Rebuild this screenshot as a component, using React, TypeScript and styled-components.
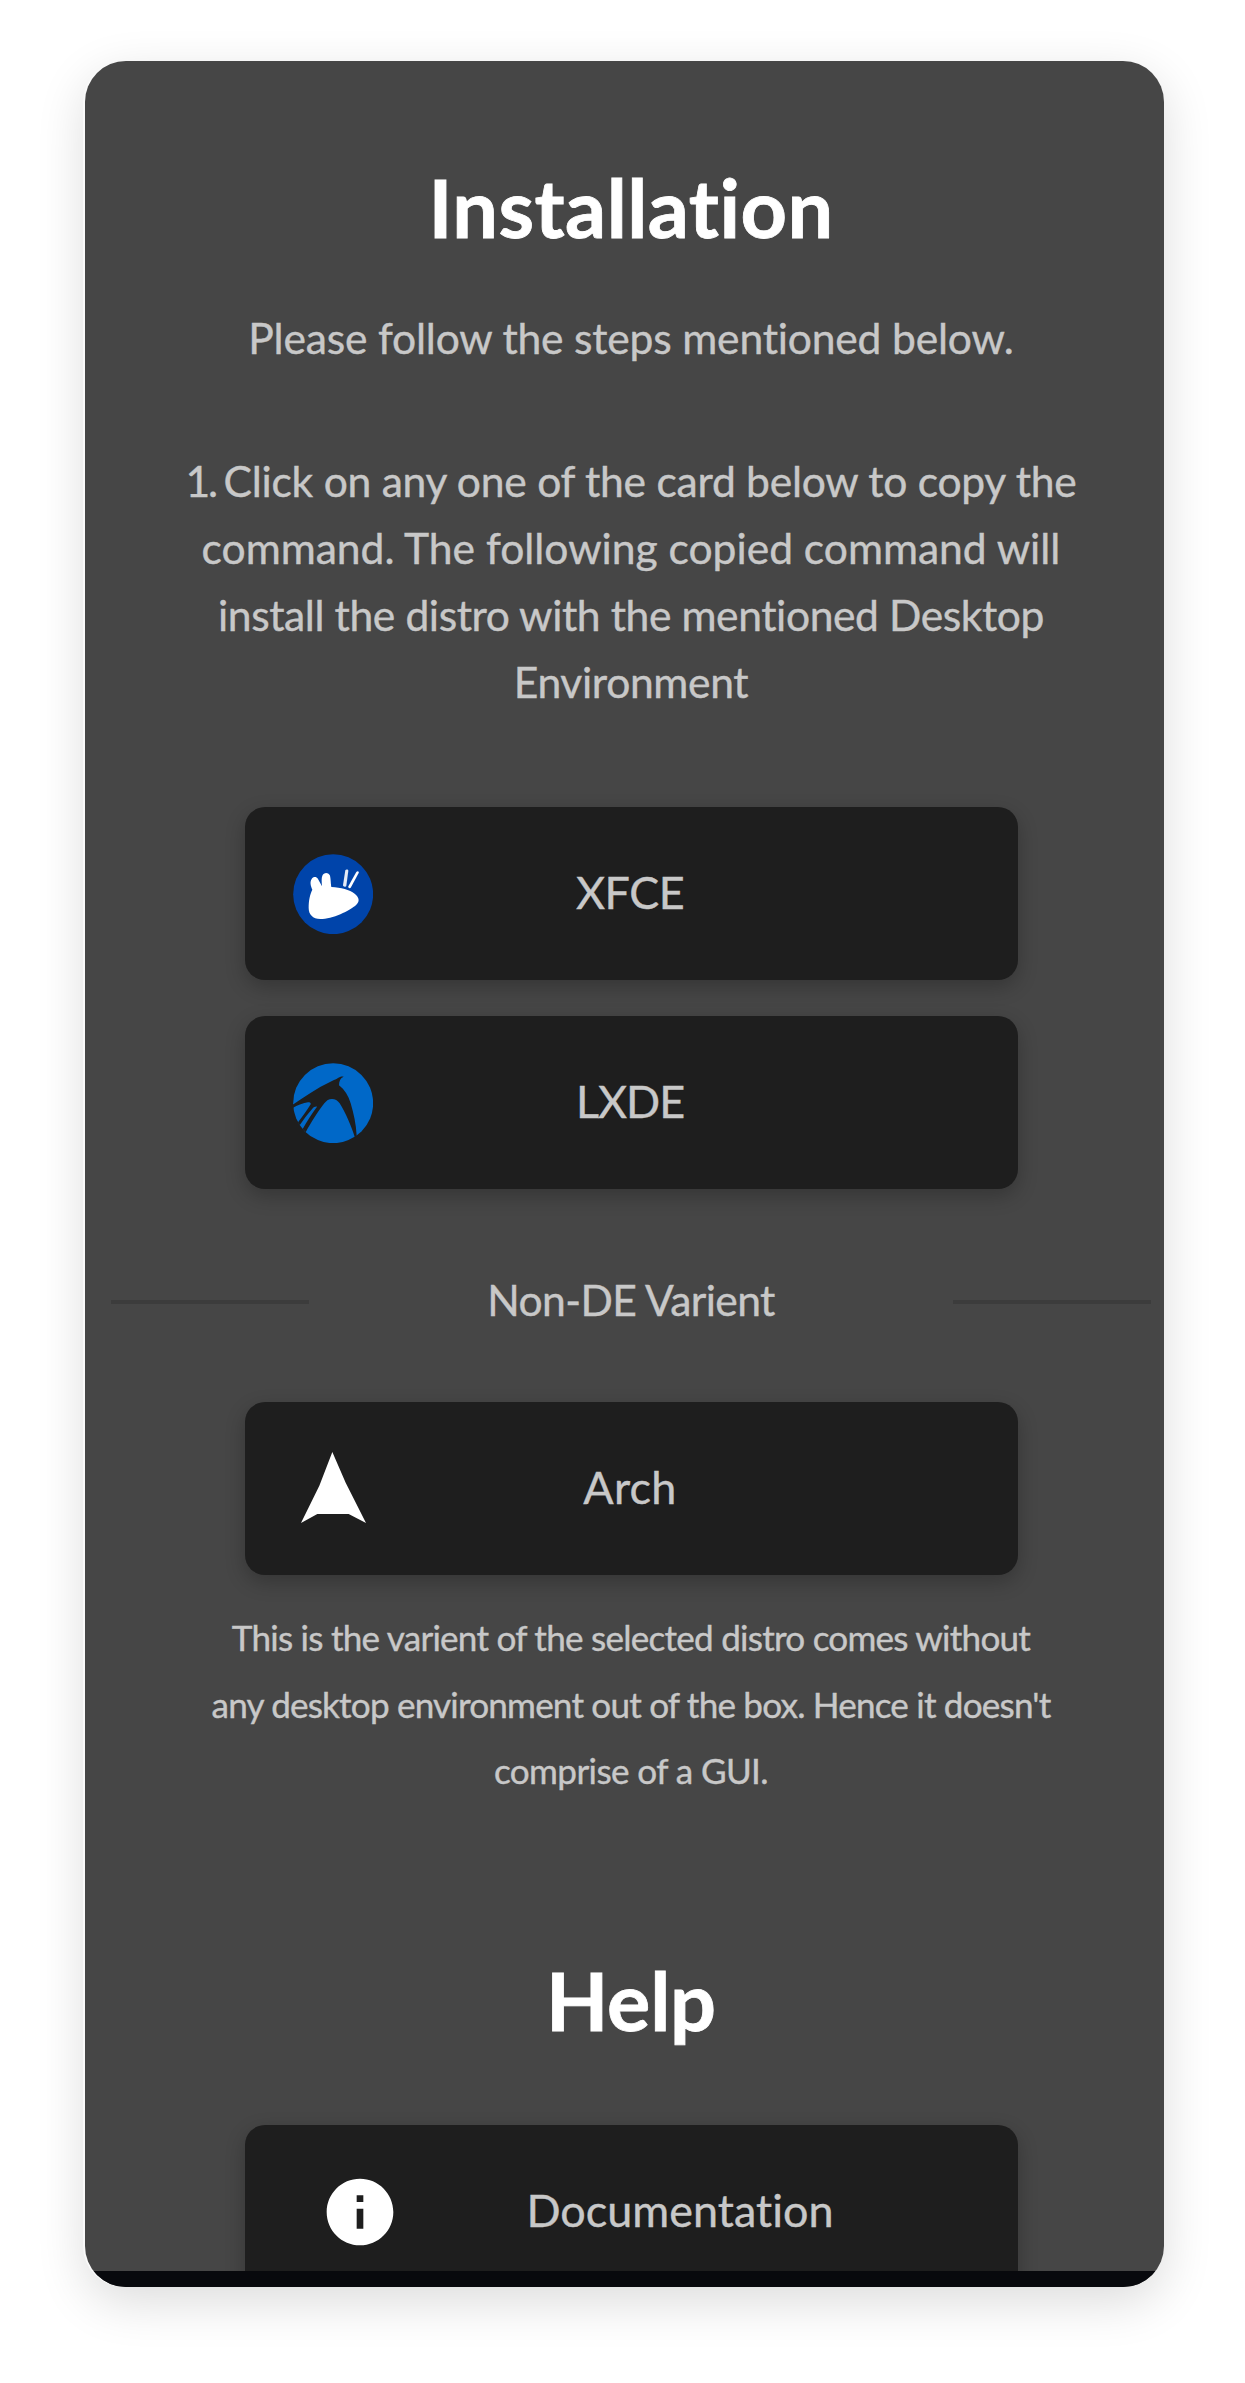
import React from 'react';
import styled, { createGlobalStyle } from 'styled-components';

const GlobalStyle = createGlobalStyle`
  * { box-sizing: border-box; }
  body {
    margin: 0;
    background: #fff;
    font-family: Lato, "Open Sans", sans-serif;
  }
`;

const Page = styled.main`
  height: 2383px;
  padding: 60.5px 0 0 85px;
  overflow: hidden;
`;

const Panel = styled.div`
  display: flex;
  flex-direction: column;
  width: 1079px;
  height: 2226.5px;
  border-radius: 41px;
  overflow: hidden;
  background: #464646;
  box-shadow: -2px 0 0 #fafafa, 0 15px 50px rgba(0, 0, 0, 0.14);
`;

const Content = styled.div`
  flex: 1;
  min-height: 0;
  overflow: hidden;
  display: flex;
  flex-direction: column;
  align-items: center;
  padding: 97.5px 0 0 13px;
`;

const BottomBar = styled.div`
  flex: none;
  height: 16px;
  background: #08090d;
`;

const Heading = styled.h2<{ $tracking: number; $top?: number }>`
  flex: none;
  margin: ${(p) => p.$top ?? 0}px 0 0;
  font-size: 81px;
  font-weight: 700;
  line-height: 97px;
  color: #fff;
  letter-spacing: ${(p) => p.$tracking}px;
  -webkit-text-stroke: 0.8px #fff;
`;

const Paragraph = styled.p<{ $top: number; $small?: boolean }>`
  flex: none;
  margin: ${(p) => p.$top}px 0 0;
  font-size: ${(p) => (p.$small ? 35.1 : 42.6)}px;
  line-height: ${(p) => (p.$small ? 66.7 : 67)}px;
  color: #c8c8c8;
  text-align: center;
  -webkit-text-stroke: 0.4px #c8c8c8;
`;

const Line = styled.span<{ $tracking: number }>`
  display: block;
  white-space: nowrap;
  letter-spacing: ${(p) => p.$tracking}px;
`;

const StepNumber = styled.span`
  letter-spacing: -2.2px;
  margin-right: -3px;
`;

const CardList = styled.div<{ $top: number }>`
  flex: none;
  display: flex;
  flex-direction: column;
  gap: 36px;
  margin-top: ${(p) => p.$top}px;
`;

const Card = styled.button<{ $shift: number }>`
  display: grid;
  grid-template-columns: ${(p) => 177 + p.$shift}px 1fr ${(p) => 177 - p.$shift}px;
  align-items: center;
  width: 773px;
  height: 173px;
  padding: 0;
  border: 0;
  border-radius: 20px;
  background: #1e1e1e;
  box-shadow: 0 7px 20px rgba(0, 0, 0, 0.24);
  font-family: inherit;
`;

const CardIcon = styled.span<{ $left: number }>`
  display: flex;
  padding-left: ${(p) => p.$left}px;

  svg {
    width: 80px;
    height: 80px;
  }
`;

const CardLabel = styled.span<{ $tracking: number }>`
  justify-self: center;
  padding: 0 2px 4px 0;
  font-size: 44.9px;
  line-height: 54px;
  color: #c8c8c8;
  white-space: nowrap;
  letter-spacing: ${(p) => p.$tracking}px;
  -webkit-text-stroke: 0.4px #c8c8c8;
`;

const Divider = styled.div`
  flex: none;
  display: flex;
  justify-content: space-between;
  align-items: center;
  width: 1040px;
  height: 67px;
  margin-top: 77px;
`;

const Rule = styled.span`
  width: 198px;
  height: 4px;
  margin-top: 5px;
  background: #3c3c3c;
`;

const XubuntuIcon = () => (
  <svg viewBox="0 0 240 240">
    <circle cx="120.5" cy="120.5" r="120" fill="#0044aa" />
    <path
      fill="#fff"
      d="M58 107C53 96 50 84 56 75C61 67 70 67 75 75L87 97C86 84 85 72 88 65C92 55 105 54 110 63C113 68 113 85 115 99C144 101 170 107 185 119C200 132 200 142 190 152C171 170 118 195 82 195C59 195 47 181 47 162C47 138 51 121 58 107Z"
    />
    <path fill="#e4ebf6" d="M157 49C159 45 166 46 166 50L160 95C159 100 150 99 150 94Z" />
    <path fill="#fff" d="M190 54C194 50 199 53 197 57L174 100C171 105 164 102 166 97Z" />
  </svg>
);

const LubuntuIcon = () => (
  <svg viewBox="0 0 240 240">
    <circle cx="120.5" cy="120.5" r="120" fill="#0068c8" />
    <path
      fill="#1e1e1e"
      d="M-2 126C34 101 73 75 111 57C119 53 127 50 135 45C140 41 147 39 152 41C142 45 138 54 138 67C155 80 166 98 173 121C182 151 189 183 191 218L186 224C175 190 158 149 140 121C134 112 126 108 117 108C107 108 101 112 94 121C76 144 55 177 38 208L29 198C42 174 57 151 72 131C67 130 62 132 58 137C43 154 31 170 20 187L15 178C29 160 42 142 53 124C54 119 50 118 45 118C30 119 15 127 -1 135Z"
    />
  </svg>
);

const ArchIcon = () => (
  <svg viewBox="0 0 240 240">
    <path fill="#fff" d="M118 9L158 101L219 222L167 195H73L24 222L79 110Z" />
  </svg>
);

const InfoIcon = () => (
  <svg viewBox="0 0 24 24">
    <path
      fill="#fff"
      d="M12 2C6.480 2 2 6.480 2 12s4.480 10 10 10 10-4.480 10-10S17.520 2 12 2zm1 15h-2v-6h2v6zm0-8h-2V7h2v2z"
    />
  </svg>
);

interface OptionProps {
  icon: React.ReactNode;
  label: string;
  tracking: number;
  iconLeft?: number;
  shift?: number;
}

const Option = ({ icon, label, tracking, iconLeft = 48.5, shift = 0 }: OptionProps) => (
  <Card $shift={shift}>
    <CardIcon $left={iconLeft}>{icon}</CardIcon>
    <CardLabel $tracking={tracking}>{label}</CardLabel>
  </Card>
);

export default function App() {
  return (
    <>
      <GlobalStyle />
      <Page>
        <Panel>
          <Content>
            <Heading $tracking={0.45}>Installation</Heading>
            <Paragraph $top={49}>
              <Line $tracking={-0.191}>Please follow the steps mentioned below.</Line>
            </Paragraph>
            <Paragraph $top={76}>
              <Line $tracking={-0.26}>
                <StepNumber>1.</StepNumber> Click on any one of the card below to copy the
              </Line>
              <Line $tracking={-0.02}>command. The following copied command will</Line>
              <Line $tracking={-0.41}>install the distro with the mentioned Desktop</Line>
              <Line $tracking={-0.35}>Environment</Line>
            </Paragraph>
            <CardList $top={92}>
              <Option icon={<XubuntuIcon />} label="XFCE" tracking={-0.5} />
              <Option icon={<LubuntuIcon />} label="LXDE" tracking={-1} />
            </CardList>
            <Divider>
              <Rule />
              <Paragraph $top={0}>
                <Line $tracking={-0.6}>Non-DE Varient</Line>
              </Paragraph>
              <Rule />
            </Divider>
            <CardList $top={69}>
              <Option icon={<ArchIcon />} label="Arch" tracking={0.3} />
            </CardList>
            <Paragraph $top={29} $small>
              <Line $tracking={-0.75}>This is the varient of the selected distro comes without</Line>
              <Line $tracking={-0.8}>any desktop environment out of the box. Hence it doesn't</Line>
              <Line $tracking={-0.595}>comprise of a GUI.</Line>
            </Paragraph>
            <Heading $top={147} $tracking={-0.163}>
              Help
            </Heading>
            <CardList $top={77}>
              <Option icon={<InfoIcon />} label="Documentation" tracking={0.04} iconLeft={75.5} shift={50} />
            </CardList>
          </Content>
          <BottomBar />
        </Panel>
      </Page>
    </>
  );
}
